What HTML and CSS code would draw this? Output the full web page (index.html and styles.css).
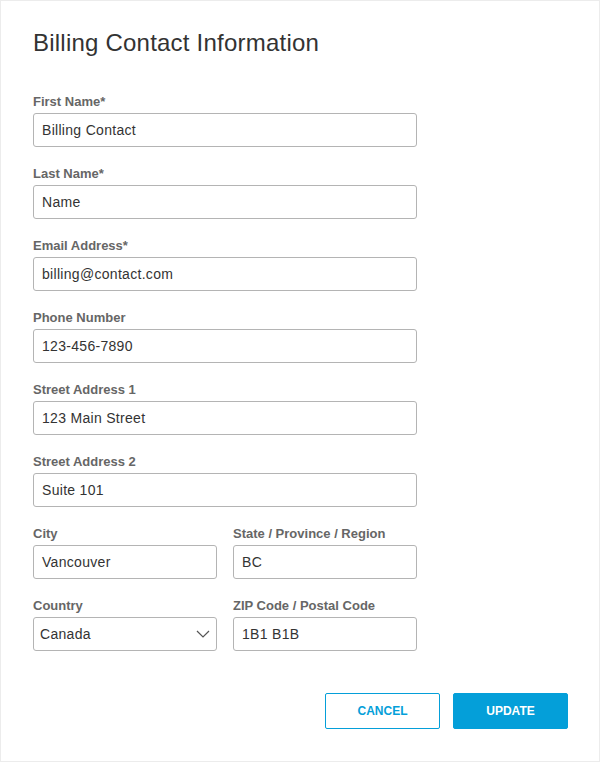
FILE: index.html
```html
<!DOCTYPE html>
<html>
<head>
<meta charset="utf-8">
<link rel="stylesheet" href="styles.css">
</head>
<body>
<div class="panel">
  <h1 class="title">Billing Contact Information</h1>
  <form class="form">
    <div class="field">
      <label class="label">First Name*</label>
      <div class="input">Billing Contact</div>
    </div>
    <div class="field">
      <label class="label">Last Name*</label>
      <div class="input">Name</div>
    </div>
    <div class="field">
      <label class="label">Email Address*</label>
      <div class="input">billing@contact.com</div>
    </div>
    <div class="field">
      <label class="label">Phone Number</label>
      <div class="input">123-456-7890</div>
    </div>
    <div class="field">
      <label class="label">Street Address 1</label>
      <div class="input">123 Main Street</div>
    </div>
    <div class="field">
      <label class="label">Street Address 2</label>
      <div class="input">Suite 101</div>
    </div>
    <div class="row">
      <div class="field">
        <label class="label">City</label>
        <div class="input">Vancouver</div>
      </div>
      <div class="field">
        <label class="label">State / Province / Region</label>
        <div class="input">BC</div>
      </div>
    </div>
    <div class="row">
      <div class="field">
        <label class="label">Country</label>
        <div class="input select">
          <span>Canada</span>
          <svg class="chev" width="14" height="8" viewBox="0 0 14 8"><path d="M1 1 L7 7 L13 1" fill="none" stroke="#555" stroke-width="1.2"/></svg>
        </div>
      </div>
      <div class="field">
        <label class="label">ZIP Code / Postal Code</label>
        <div class="input">1B1 B1B</div>
      </div>
    </div>
  </form>
  <div class="actions">
    <button class="btn btn-outline" type="button">CANCEL</button>
    <button class="btn btn-primary" type="button">UPDATE</button>
  </div>
</div>
</body>
</html>
```
FILE: styles.css
```css
html, body {
  margin: 0;
  padding: 0;
  background: #fff;
}
body {
  font-family: "Liberation Sans", Arial, sans-serif;
  color: #333;
}
.panel {
  box-sizing: border-box;
  width: 600px;
  height: 762px;
  border: 1px solid #ececec;
  padding: 0 32px 0 32px;
}
.title {
  margin: 0;
  padding-top: 28px;
  font-size: 24px;
  line-height: 28px;
  font-weight: normal;
  letter-spacing: 0.22px;
  color: #333;
}
.form {
  width: 384px;
  margin-top: 37px;
  display: flex;
  flex-direction: column;
  gap: 19px;
}
.field {
  display: flex;
  flex-direction: column;
  gap: 3px;
}
.row {
  display: grid;
  grid-template-columns: 184px 184px;
  column-gap: 16px;
}
.label {
  font-size: 13px;
  line-height: 16px;
  font-weight: bold;
  color: #666;
}
.input {
  box-sizing: border-box;
  height: 34px;
  border: 1px solid #b4b4b4;
  border-radius: 3px;
  padding: 0 8px;
  font-size: 14px;
  line-height: 32px;
  letter-spacing: 0.3px;
  color: #333;
  display: flex;
  align-items: center;
}
.select {
  justify-content: space-between;
  padding: 0 6px 0 6px;
}
.actions {
  display: flex;
  justify-content: flex-end;
  gap: 13px;
  margin-top: 42px;
  padding-right: 0;
  margin-right: -1px;
}
.btn {
  box-sizing: border-box;
  width: 115px;
  height: 36px;
  border-radius: 2px;
  font-family: "Liberation Sans", Arial, sans-serif;
  font-size: 12px;
  font-weight: bold;
  cursor: pointer;
}
.btn-outline {
  background: #fff;
  border: 1px solid #049fd9;
  color: #049fd9;
}
.btn-primary {
  background: #049fd9;
  border: 1px solid #049fd9;
  color: #fff;
}
```
